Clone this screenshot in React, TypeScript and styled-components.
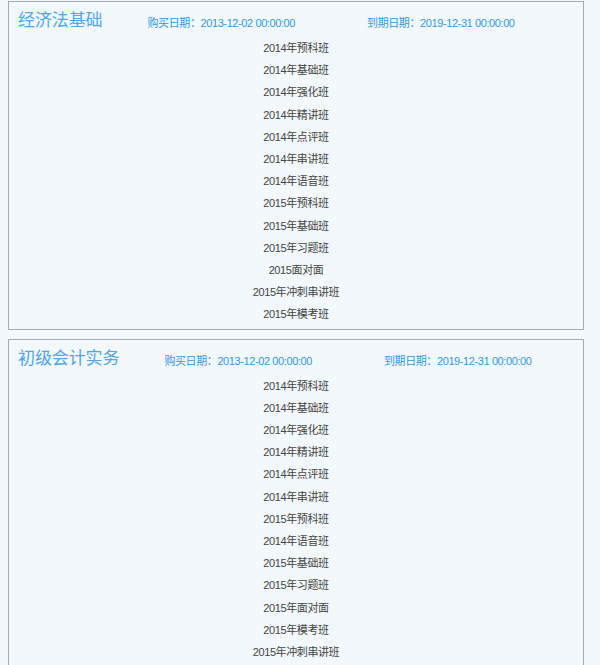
import React from "react";
import styled, { createGlobalStyle } from "styled-components";

const GlobalStyle = createGlobalStyle`
  html, body {
    margin: 0;
    padding: 0;
    background-color: #f2f8fb;
  }
  body {
    padding: 1px 16px 0 8px;
    font-family: "Liberation Sans", "Noto Sans CJK SC", sans-serif;
  }
`;

const CourseBox = styled.div`
  width: 576px;
  box-sizing: border-box;
  border: 1px solid #a7a9ab;
  background-color: #f2f8fb;
  padding: 0 0 3px 0;
  margin-bottom: 9px;
`;

const Header = styled.div`
  display: flex;
  align-items: flex-start;
  height: 35px;
  padding: 7px 0 0 9px;
  box-sizing: border-box;
`;

const Title = styled.h2`
  margin: 0;
  font-size: 17px;
  line-height: 24px;
  font-weight: normal;
  letter-spacing: -0.1px;
  color: #4ea5ec;
`;

const DateText = styled.span<{ $gap: number }>`
  margin: 6px 0 0 ${(p) => p.$gap}px;
  font-size: 11px;
  line-height: 16px;
  letter-spacing: -0.4px;
  color: #2f98e4;
`;

const ClassList = styled.ul`
  list-style: none;
  margin: 0;
  padding: 0;
`;

const ClassItem = styled.li`
  text-align: center;
  font-size: 11px;
  line-height: 22.2px;
  letter-spacing: -0.4px;
  color: #444;
`;

type Course = {
  name: string;
  buy: string;
  end: string;
  classes: string[];
};

const courses: Course[] = [
  {
    name: "经济法基础",
    buy: "2013-12-02 00:00:00",
    end: "2019-12-31 00:00:00",
    classes: [
      "2014年预科班",
      "2014年基础班",
      "2014年强化班",
      "2014年精讲班",
      "2014年点评班",
      "2014年串讲班",
      "2014年语音班",
      "2015年预科班",
      "2015年基础班",
      "2015年习题班",
      "2015面对面",
      "2015年冲刺串讲班",
      "2015年模考班",
    ],
  },
  {
    name: "初级会计实务",
    buy: "2013-12-02 00:00:00",
    end: "2019-12-31 00:00:00",
    classes: [
      "2014年预科班",
      "2014年基础班",
      "2014年强化班",
      "2014年精讲班",
      "2014年点评班",
      "2014年串讲班",
      "2015年预科班",
      "2014年语音班",
      "2015年基础班",
      "2015年习题班",
      "2015年面对面",
      "2015年模考班",
      "2015年冲刺串讲班",
    ],
  },
];

const App: React.FC = () => {
  return (
    <>
      <GlobalStyle />
      {courses.map((c) => (
        <CourseBox key={c.name}>
          <Header>
            <Title>{c.name}</Title>
            <DateText $gap={45}>购买日期：{c.buy}</DateText>
            <DateText $gap={72}>到期日期：{c.end}</DateText>
          </Header>
          <ClassList>
            {c.classes.map((item, i) => (
              <ClassItem key={i}>{item}</ClassItem>
            ))}
          </ClassList>
        </CourseBox>
      ))}
    </>
  );
};

export default App;
